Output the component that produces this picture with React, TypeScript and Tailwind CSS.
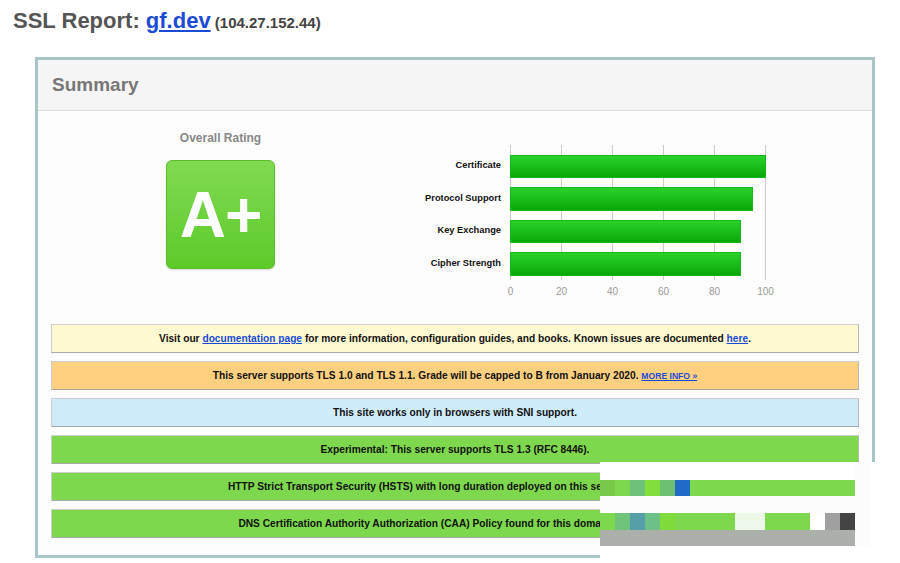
import React from "react";

const bars = [
  { label: "Certificate", value: 100 },
  { label: "Protocol Support", value: 95 },
  { label: "Key Exchange", value: 90 },
  { label: "Cipher Strength", value: 90 },
];

const ticks = [0, 20, 40, 60, 80, 100];

function MoreInfo() {
  return <a className="text-[8.6px] text-[#1a4bd6] underline underline-offset-1">MORE INFO »</a>;
}

function Notice({ bg, children }: { bg: string; children: React.ReactNode }) {
  return (
    <div
      className={`h-[29px] flex items-center justify-center border border-[#cfcfcf] border-b-[#a8a8a8] border-r-[#b8b8b8] text-[10.2px] font-bold text-[#111] ${bg}`}
    >
      <p>{children}</p>
    </div>
  );
}

function Chart() {
  return (
    <div className="pt-[34px]">
      <div className="flex">
        <div className="w-[107px] flex flex-col pt-[9.5px] gap-[9px] pr-[9px]">
          {bars.map((b) => (
            <div key={b.label} className="h-[23.5px] flex items-center justify-end text-[9.3px] font-bold text-[#111] whitespace-nowrap">
              {b.label}
            </div>
          ))}
        </div>
        <div className="relative w-[257px] h-[135px]">
          <svg className="absolute inset-0" width="257" height="135">
            {ticks.map((t) => (
              <line key={t} x1={t * 2.55 + 0.5} x2={t * 2.55 + 0.5} y1="0" y2="135" stroke="#cccccc" strokeWidth="1" />
            ))}
          </svg>
          <div className="relative flex flex-col pt-[9.5px] gap-[9px]">
            {bars.map((b) => (
              <div
                key={b.label}
                className="h-[23.5px] border border-[#19b819] bg-gradient-to-b from-[#2ad22a] to-[#06a806]"
                style={{ width: `${b.value * 2.55 + 1}px` }}
              />
            ))}
          </div>
        </div>
      </div>
      <div className="relative ml-[107px] h-[12px] mt-[6px] text-[10px] text-[#9a9a9a]">
        {ticks.map((t) => (
          <span key={t} className="absolute top-0 -translate-x-1/2 leading-[12px]" style={{ left: `${t * 2.55 + 0.5}px` }}>
            {t}
          </span>
        ))}
      </div>
    </div>
  );
}

export default function App() {
  return (
    <div className="relative w-[900px] h-[563px] overflow-hidden bg-white font-['Liberation_Sans',Arial,sans-serif]">
      <h1 className="pt-[8px] pl-[13px] leading-[25px] font-bold">
        <span className="text-[22px] text-[#555]">SSL Report: </span>
        <a className="text-[22px] text-[#1a4bd6] underline underline-offset-2">gf.dev</a>
        <span className="text-[15px] text-[#444]"> (104.27.152.44)</span>
      </h1>

      <div className="mt-[22px] ml-[35px] w-[840px] border-[3px] border-[#a9c5c8]">
        <div className="h-[51px] bg-[#f5f5f5] border-b border-[#dcdcdc] flex items-center pl-[14px]">
          <h2 className="text-[19px] font-bold text-[#777]">Summary</h2>
        </div>

        <div className="bg-[#fdfdfd] pb-[17px]">
          <div className="h-[213px] flex">
            <div className="w-[365px] flex flex-col items-center pt-[20px]">
              <div className="text-[12px] leading-[14px] font-bold text-[#888]">Overall Rating</div>
              <div className="mt-[15px] w-[109px] h-[109px] rounded-[6px] border border-[#5cbc2c] bg-gradient-to-b from-[#80da50] to-[#5ccb28] shadow-[0_1px_2px_rgba(0,0,0,0.15)] flex items-center justify-center">
                <span className="text-[64px] font-bold text-white tracking-[-1px] leading-none">A+</span>
              </div>
            </div>
            <Chart />
          </div>

          <div className="px-[13px] flex flex-col gap-[8px]">
            <Notice bg="bg-[#fffad2]">
              Visit our <a className="font-bold text-[#1a4bd6] underline underline-offset-1">documentation page</a> for more
              information, configuration guides, and books. Known issues are documented{" "}
              <a className="text-[#1a4bd6] underline underline-offset-1">here</a>.
            </Notice>
            <Notice bg="bg-[#ffd07f]">
              This server supports TLS 1.0 and TLS 1.1. Grade will be capped to B from January 2020. <MoreInfo />
            </Notice>
            <Notice bg="bg-[#cfecfd]">This site works only in browsers with SNI support.</Notice>
            <Notice bg="bg-[#7ed84e]">Experimental: This server supports TLS 1.3 (RFC 8446).</Notice>
            <Notice bg="bg-[#7ed84e]">
              HTTP Strict Transport Security (HSTS) with long duration deployed on this server. <MoreInfo />
            </Notice>
            <Notice bg="bg-[#7ed84e]">
              DNS Certification Authority Authorization (CAA) Policy found for this domain. <MoreInfo />
            </Notice>
          </div>
        </div>
      </div>

      {/* pixelated mask over the bottom right corner */}
      <div className="absolute left-[600px] top-[462px] w-[300px] h-[101px] bg-white">
        <div className="w-[270px] flex flex-col">
          <div className="h-[18px] flex">
            <div className="w-[255px] bg-white" />
            <div className="w-[15px] bg-[#fcfcfc]" />
          </div>
          <div className="h-[16px] flex">
            <div className="w-[15px] bg-[#78c84a]" />
            <div className="w-[15px] bg-[#7ed84e]" />
            <div className="w-[15px] bg-[#6dc17a]" />
            <div className="w-[15px] bg-[#82de3a]" />
            <div className="w-[15px] bg-[#6cc070]" />
            <div className="w-[15px] bg-[#1e6cc8]" />
            <div className="w-[165px] bg-[#7ed84e]" />
            <div className="w-[15px] bg-[#fcfcfc]" />
          </div>
          <div className="h-[17px] bg-[#fcfcfc]" />
          <div className="h-[17px] flex">
            <div className="w-[15px] bg-[#7ed84e]" />
            <div className="w-[15px] bg-[#6fc47a]" />
            <div className="w-[15px] bg-[#55a0a8]" />
            <div className="w-[15px] bg-[#6cc088]" />
            <div className="w-[15px] bg-[#80dc3a]" />
            <div className="w-[60px] bg-[#7ed84e]" />
            <div className="w-[30px] bg-[#eef8e8]" />
            <div className="w-[45px] bg-[#7ed84e]" />
            <div className="w-[15px] bg-white" />
            <div className="w-[15px] bg-[#a0a0a0]" />
            <div className="w-[15px] bg-[#444444]" />
            <div className="w-[15px] bg-[#fcfcfc]" />
          </div>
          <div className="h-[16px] flex">
            <div className="w-[255px] bg-[#acb0aa]" />
            <div className="w-[15px] bg-[#fcfcfc]" />
          </div>
        </div>
      </div>
    </div>
  );
}
